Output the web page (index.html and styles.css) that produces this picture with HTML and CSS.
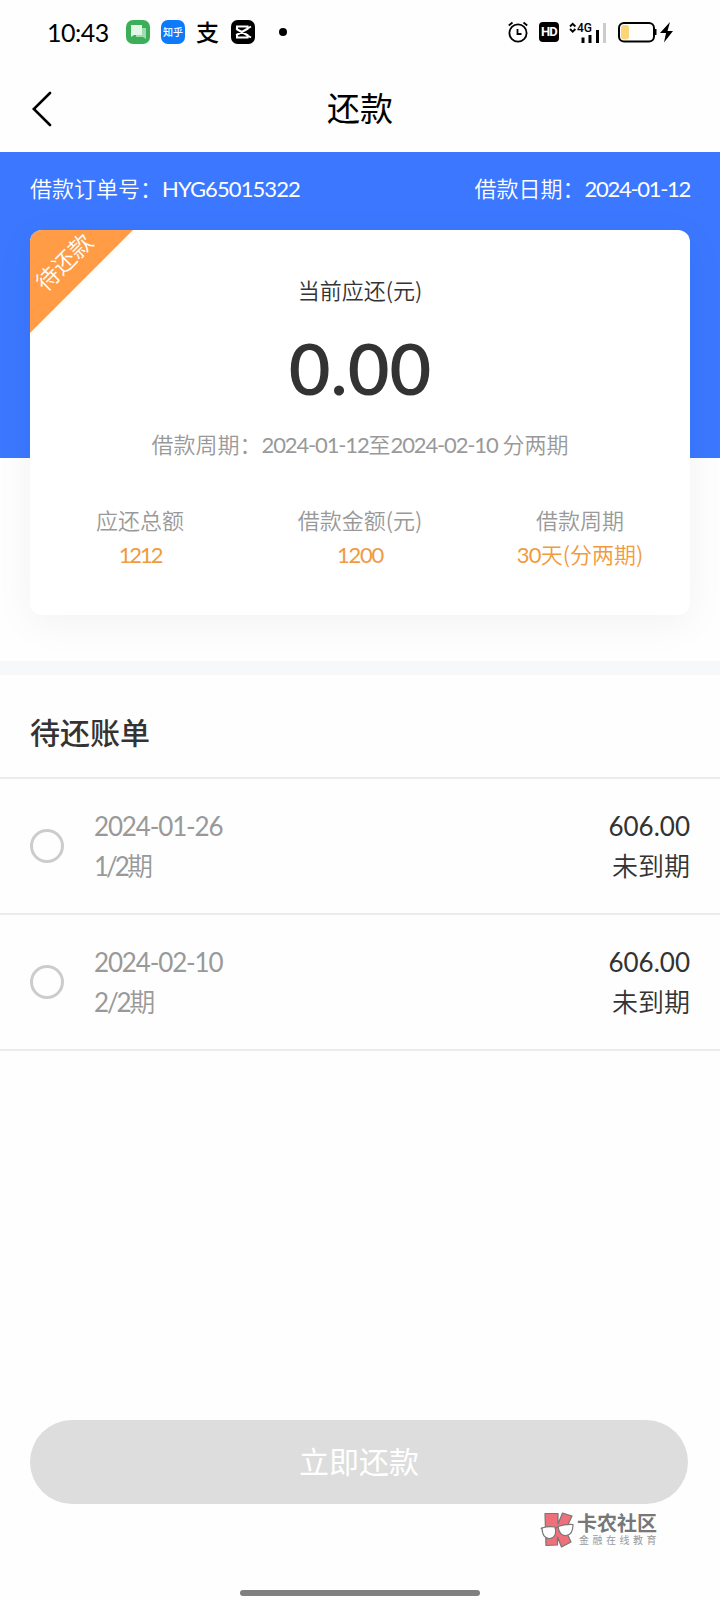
FILE: index.html
```html
<!DOCTYPE html>
<html lang="zh-CN">
<head>
<meta charset="utf-8">
<title>还款</title>
<link rel="stylesheet" href="styles.css">
</head>
<body>
<div class="page">
  <div class="status">
    <span class="clock">10:43</span>
    <svg class="app app-msg" width="24" height="24" viewBox="0 0 24 24"><rect width="24" height="24" rx="7" fill="#3bae5a"/><path d="M10 8h10v11l-3-2h-7z" fill="#9fdcae"/><path d="M5 5h11v10H8l-3 2z" fill="#e2f6e5"/></svg>
    <span class="app app-zhihu">知乎</span>
    <span class="app app-pay">支</span>
    <svg class="app app-cut" width="24" height="24" viewBox="0 0 24 24"><rect width="24" height="24" rx="6.500" fill="#000"/><g fill="none" stroke="#fff" stroke-width="2"><path d="M20 6.500L6 14.500V17.500H16.500V15L5 8.500M20 17.500L6 9.500V6.500H16.500V9L5 15.500"/></g></svg>
    <span class="dot"></span>
    <div class="system">
      <svg width="20" height="22" viewBox="0 0 20 22" fill="none" stroke="#000" stroke-width="1.800"><circle cx="10" cy="12" r="8.600"/><path d="M9.500 8v5h4M.8 4.500L4.500 1.500M15.500 1.500l3.700 3"/></svg>
      <span class="hd">HD</span>
      <svg class="signal" width="38" height="22" viewBox="0 0 38 22"><path d="M1 5.500L3.700 2.800L6.400 5.500M1 8L3.700 10.700L6.400 8" fill="none" stroke="#000" stroke-width="1.800"/><path d="M12.500 16.500v5.500h3v-5.500zM19.500 14v8h3v-8zM27 9v13h3V9z"/><path d="M34 2v20h3V2z" fill="#ccc"/><text x="8" y="11" class="signal-text">4G</text></svg>
      <svg class="battery" width="56" height="22" viewBox="0 0 56 22"><rect x="1" y="2" width="35" height="18.500" rx="5" fill="none" stroke="#000" stroke-width="2"/><rect x="3" y="4" width="8" height="14.500" rx="3" fill="#fbd678"/><path d="M37 8h1.500v6H37zM52 1L42 12h6l-2 9.500L55 10h-5.500z"/></svg>
    </div>
  </div>
  <div class="nav">
    <svg class="back" width="20" height="36" viewBox="0 0 20 36"><path d="M18 2L1.800 18L18 34" fill="none" stroke="#000" stroke-width="2.600" stroke-linecap="round"/></svg>
    <h1 class="nav-title">还款</h1>
  </div>
  <div class="hero">
    <div class="order">
      <span>借款订单号：<span class="num serial">HYG65015322</span></span>
      <span>借款日期：<span class="num">2024-01-12</span></span>
    </div>
    <div class="card">
      <div class="ribbon"><span class="ribbon-text">待还款</span></div>
      <div class="due-label">当前应还(元)</div>
      <div class="due">0.00</div>
      <div class="period">借款周期：<span class="num">2024-01-12</span>至<span class="num">2024-02-10</span> 分两期</div>
      <div class="stats">
        <div class="stat"><div>应还总额</div><div class="value"><span class="num total">1212</span></div></div>
        <div class="stat"><div>借款金额(元)</div><div class="value"><span class="num">1200</span></div></div>
        <div class="stat"><div>借款周期</div><div class="value"><span class="num days">30</span>天(分两期)</div></div>
      </div>
    </div>
  </div>
  <h2 class="section">待还账单</h2>
  <div class="bill">
    <span class="radio"></span>
    <div class="bill-info"><div class="num date">2024-01-26</div><div class="term"><span class="num first">1/2</span>期</div></div>
    <div class="bill-due"><div class="num amount">606.00</div><div class="term">未到期</div></div>
  </div>
  <div class="bill">
    <span class="radio"></span>
    <div class="bill-info"><div class="num date">2024-02-10</div><div class="term"><span class="num second">2/2</span>期</div></div>
    <div class="bill-due"><div class="num amount">606.00</div><div class="term">未到期</div></div>
  </div>
  <div class="footer">
    <button class="pay">立即还款</button>
    <div class="brand">
      <svg width="34" height="36" viewBox="0 0 34 36"><g stroke="#777" stroke-width="1.200" stroke-linejoin="round"><path d="M5 1.500H18V12L22.500 1L32 4L25.500 18L31 30L21.500 35L17.500 25V33L6 33.500z" fill="#ee707b"/><path d="M2 16Q8 14 15 15Q17.500 25 10 26.500Q2.500 27 2 16zM18 14.500Q25 12 33 12.500Q33 23 26 23.500Q19.500 24 18 14.500z" fill="#fff"/><path d="M.8 17L2 15.500M15 16.500L18 15" fill="none"/></g></svg>
      <div class="brand-words"><div class="brand-name">卡农社区</div><div class="brand-sub">金融在线教育</div></div>
    </div>
    <div class="home"></div>
  </div>
</div>
</body>
</html>
```
FILE: styles.css
```css
* { box-sizing: border-box; }
body { margin: 0; background: #fefefe; color: #333; font-family: "Noto Sans CJK SC", sans-serif; font-weight: 350; }
h1, h2 { margin: 0; }
.page { display: flex; flex-direction: column; width: 720px; height: 1600px; overflow: hidden; }
.num { font-family: Lato, "Noto Sans CJK SC", sans-serif; font-weight: 400; letter-spacing: -1.3px; }
.serial { letter-spacing: -.9px; }
.total { letter-spacing: -2.100px; }
.days { letter-spacing: -.8px; }
.period .num { letter-spacing: -1.150px; }
.date { letter-spacing: -1.150px; }
.first { letter-spacing: -3px; }
.second { letter-spacing: -2.200px; }
.amount { letter-spacing: 0; }

.status { display: flex; align-items: center; height: 64px; padding-left: 47px; padding-right: 46px; color: #000; }
.clock { width: 79px; font: 25px/30px Lato, sans-serif; letter-spacing: -.5px; white-space: nowrap; }
.app { flex: none; width: 24px; height: 24px; margin-right: 11px; }
.app-zhihu { border-radius: 7px; background: #0d79fb; color: #fff; font-size: 10px; font-weight: 500; line-height: 23px; text-align: center; }
.app-pay { font-size: 23px; font-weight: 500; line-height: 23px; }
.dot { width: 8px; height: 8px; margin-left: 13px; border-radius: 50%; background: #000; }
.system { display: flex; align-items: center; margin-left: auto; }
.hd { width: 20px; height: 20px; margin: 0 10px 0 11px; border-radius: 4px; background: #000; color: #fff; font: 700 13px/20px Roboto, sans-serif; letter-spacing: -.8px; text-align: center; }
.signal { margin-right: 11px; }
.signal-text { font: 500 12px Roboto, sans-serif; }

.nav { display: grid; grid-template-columns: 100px 1fr 100px; align-items: center; height: 88px; color: #000; }
.back { margin-left: 32px; margin-top: 2px; }
.nav-title { font-size: 33px; font-weight: 400; line-height: 42px; padding-bottom: 2px; text-align: center; }

.hero { height: 523px; padding: 0 30px; border-bottom: 14px solid #f7f8fa; background: linear-gradient(#3b78ff 306px, transparent 306px); }
.order { display: flex; justify-content: space-between; height: 78px; color: #fff; font-size: 22px; line-height: 70px; }
.card { position: relative; height: 385px; padding-top: 42px; border-radius: 12px; background: #fff; box-shadow: 0 8px 40px rgba(0, 0, 0, .05); font-size: 22px; line-height: 34px; text-align: center; }
.ribbon { position: absolute; left: 0; top: 0; width: 103px; height: 103px; border-top-left-radius: 12px; background: #ff9c45; clip-path: polygon(0 0, 100% 0, 0 100%); }
.ribbon-text { position: absolute; left: -7px; top: 14px; width: 80px; color: #fff; font-size: 23px; transform: rotate(-45deg); }
.due { height: 86px; margin-top: 18px; font: 600 72px/86px Lato, sans-serif; }
.period { margin-top: 16px; color: #999; white-space: pre; }
.stats { display: grid; grid-template-columns: repeat(3, 1fr); margin-top: 40px; color: #999; }
.value { color: #f19a3e; }

.section { height: 104px; padding: 0 30px; border-bottom: 2px solid #ebebeb; font-size: 30px; font-weight: 500; line-height: 112px; }
.bill { display: flex; align-items: center; height: 136px; padding: 0 30px; border-bottom: 2px solid #ebebeb; font-size: 26px; line-height: 40px; }
.radio { width: 34px; height: 34px; margin-right: 30px; border: 3px solid #ccc; border-radius: 50%; }
.bill-info { flex: 1; color: #999; }
.bill-due { text-align: right; }
.term { height: 40px; line-height: 37px; }

.footer { margin-top: auto; height: 180px; padding-left: 30px; }
.pay { display: block; width: 658px; height: 84px; padding: 0 0 4px; border: 0; border-radius: 42px; background: #ddd; color: #fff; font: 400 30px/80px "Noto Sans CJK SC", sans-serif; }
.brand { display: flex; align-items: center; height: 36px; margin: 8px 0 0 510px; gap: 3px; }
.brand-name { color: #777; font-size: 20px; font-weight: 700; line-height: 20px; }
.brand-sub { padding-left: 2px; color: #999; font-size: 10px; font-weight: 400; line-height: 14px; letter-spacing: 3.500px; white-space: nowrap; }
.home { width: 240px; height: 6px; margin: 42px 0 0 210px; border-radius: 3px; background: #808080; }
```
